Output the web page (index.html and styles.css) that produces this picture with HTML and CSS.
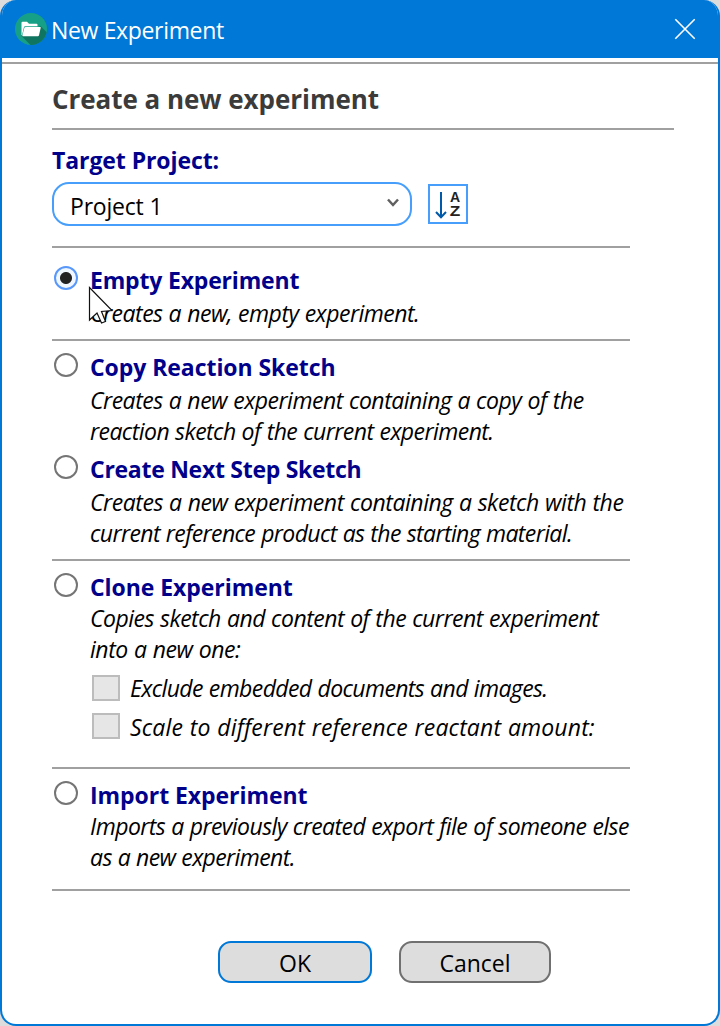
FILE: index.html
```
<!DOCTYPE html>
<html lang="en">
<head>
<meta charset="utf-8">
<title>New Experiment</title>
<link rel="stylesheet" href="styles.css">
</head>
<body>
<div class="dialog">
  <header class="titlebar">
    <svg class="app-icon" width="32" height="32" viewBox="0 0 32 32">
      <defs><clipPath id="disc"><circle cx="16" cy="16" r="16"/></clipPath></defs>
      <circle cx="16" cy="16" r="16" fill="#16a085"/>
      <path d="M25.500 13L34 21.500V34H17.500L6.500 23Z" fill="#107560" clip-path="url(#disc)"/>
      <path d="M6.500 22V9.800q0-1 1-1h4.500l2 2h7.500q1 0 1 1v1.400H10.200q-1 0-1.300 1L7.100 22Z" fill="#fff"/>
      <path d="M10.500 14h14.700q.7 0 .5.700L24 22.300q-.2.900-1.200.900H7.800q-.6 0-.4-.7l1.900-7.600q.3-.9 1.200-.9Z" fill="#fff"/>
    </svg>
    <span class="window-title">New Experiment</span>
    <svg class="close" width="22" height="22" viewBox="0 0 22 22"><path d="M1.300 1.300L20.700 20.700M20.700 1.300L1.300 20.700" stroke="#fff" stroke-width="1.600"/></svg>
  </header>
  <main class="content">
    <h1 class="title">Create a new experiment</h1>
    <div class="target">
      <div class="label">Target Project:</div>
      <div class="target-row">
        <div class="select"><span>Project 1</span>
          <svg width="12" height="10" viewBox="0 0 12 10"><path d="M1 1.500L6 7L11 1.500" fill="none" stroke="#606060" stroke-width="2.500"/></svg>
        </div>
        <div class="sort">
          <svg width="36" height="36" viewBox="0 0 36 36">
            <path d="M11 6V31M6 26L11 31.200L16 26" fill="none" stroke="#005aa9" stroke-width="2"/>
            <text class="sort-letter" x="25" y="16" text-anchor="middle">A</text>
            <text class="sort-letter" x="25" y="30" text-anchor="middle" textLength="10.500" lengthAdjust="spacingAndGlyphs">Z</text>
          </svg>
        </div>
      </div>
    </div>

    <section class="group group-empty">
      <div class="option">
        <span class="radio checked"></span>
        <div class="text">
          <h2 class="name t-loose">Empty Experiment</h2>
          <p class="line t-empty">Creates a new, empty experiment.</p>
        </div>
      </div>
      <svg class="cursor" width="26" height="40" viewBox="0 0 26 40"><path d="M1.500 1.500V34L9 27L13.500 37L17.500 35.500L13.500 25.500L24 24.500Z" fill="#fff" stroke="#111" stroke-width="1.200"/></svg>
    </section>

    <section class="group group-sketch">
      <div class="option">
        <span class="radio"></span>
        <div class="text">
          <h2 class="name t-copy">Copy Reaction Sketch</h2>
          <p class="line t-copies">Creates a new experiment containing a copy of the</p>
          <p class="line t-mid">reaction sketch of the current experiment.</p>
        </div>
      </div>
      <div class="option">
        <span class="radio"></span>
        <div class="text">
          <h2 class="name t-next">Create Next Step Sketch</h2>
          <p class="line t-wide">Creates a new experiment containing a sketch with the</p>
          <p class="line t-tight">current reference product as the starting material.</p>
        </div>
      </div>
    </section>

    <section class="group group-clone">
      <div class="option">
        <span class="radio"></span>
        <div class="text">
          <h2 class="name t-copy">Clone Experiment</h2>
          <p class="line t-empty">Copies sketch and content of the current experiment</p>
          <p class="line t-wide">into a new one:</p>
        </div>
      </div>
      <div class="checks">
        <div class="check"><span class="box"></span><span class="line t-tight">Exclude embedded documents and images.</span></div>
        <div class="check"><span class="box"></span><span class="line t-scale">Scale to different reference reactant amount:</span></div>
      </div>
    </section>

    <section class="group group-import">
      <div class="option">
        <span class="radio"></span>
        <div class="text">
          <h2 class="name t-copy">Import Experiment</h2>
          <p class="line t-mid">Imports a previously created export file of someone else</p>
          <p class="line t-tight">as a new experiment.</p>
        </div>
      </div>
    </section>
  </main>
  <footer class="actions">
    <button class="button primary">OK</button>
    <button class="button">Cancel</button>
  </footer>
</div>
</body>
</html>
```
FILE: styles.css
```
* { box-sizing: border-box; }

body {
  margin: 0;
  background: #dcdcdc;
  font: 23px/31px "Open Sans", "Noto Sans", sans-serif;
  color: #000;
}

.dialog {
  width: 720px;
  height: 1026px;
  border: 2px solid #0078d7;
  border-top: 0;
  border-radius: 16px;
  background: #fff;
  overflow: hidden;
}

.titlebar {
  display: flex;
  align-items: center;
  height: 58px;
  padding: 0 22px 0 13px;
  background: #0078d7;
  color: #fff;
}

.window-title {
  margin: 2px 0 0 4px;
  letter-spacing: -0.34px;
}

.close { margin-left: auto; }

.content {
  margin-top: 4px;
  padding: 0 44px 0 50px;
  border-top: 2px solid #a0a0a0;
}

.title {
  margin: 0;
  height: 66px;
  padding-top: 20px;
  border-bottom: 2px solid #a0a0a0;
  color: #3b3b3b;
  font-size: 26px;
  font-weight: 700;
  letter-spacing: -0.04px;
}

.target {
  width: 578px;
  height: 118px;
  padding-top: 15px;
  border-bottom: 2px solid #a0a0a0;
}

.label {
  height: 37px;
  color: #00008b;
  font-weight: 700;
  letter-spacing: -0.08px;
}

.target-row {
  display: flex;
  align-items: center;
  gap: 16px;
}

.select {
  display: flex;
  align-items: center;
  justify-content: space-between;
  width: 360px;
  height: 44px;
  padding: 0 11px 0 16px;
  border: 2px solid #479ffb;
  border-radius: 17px;
  letter-spacing: -0.2px;
}

.select span { margin-top: 4px; }
.select svg { margin-top: -3px; }

.sort {
  width: 40px;
  height: 40px;
  border: 2px solid #479ffb;
}

.sort svg { display: block; }

.sort-letter {
  fill: #222;
  font: 700 14px "Liberation Sans", sans-serif;
}

.group {
  position: relative;
  width: 578px;
  border-bottom: 2px solid #a0a0a0;
}

.group-empty { height: 93px; padding-top: 16px; }
.group-sketch { height: 220px; padding-top: 10px; }
.group-clone { height: 208px; padding-top: 10px; }
.group-import { height: 122px; padding-top: 10px; }

.option {
  display: flex;
  gap: 12px;
  padding-left: 2px;
  white-space: nowrap;
}

.option + .option { margin-top: 6px; }

.text { padding-top: 1px; }

.radio {
  flex: none;
  width: 24px;
  height: 24px;
  margin-top: 2px;
  border: 2px solid #757575;
  border-radius: 50%;
}

.radio.checked {
  border-color: #5998fb;
  background: radial-gradient(circle, #222 5.500px, #f0f7ff 6.500px);
}

.name {
  margin: 0;
  height: 33px;
  color: #00008b;
  font-size: 23px;
  font-weight: 700;
}

.group-clone .name,
.group-import .name { height: 31px; }

.line {
  margin: 0;
  font-style: italic;
  word-spacing: 0.6px;
}

.checks { padding: 7px 0 0 40px; }

.check {
  display: flex;
  align-items: center;
  gap: 10px;
  height: 31px;
  white-space: nowrap;
}

.check .line { padding-top: 2px; }

.check + .check { margin-top: 7px; }

.check + .check .line { padding-top: 3px; }

.box {
  width: 28px;
  height: 26px;
  border: 2px solid #bcbcbc;
  background: #e6e6e6;
}

/* Tracking adjustments per text line */
.t-loose { letter-spacing: -0.18px; }
.t-copy { letter-spacing: -0.06px; }
.t-next { letter-spacing: -0.28px; }
.t-empty { letter-spacing: -0.5px; }
.t-mid { letter-spacing: -0.56px; }
.t-wide { letter-spacing: -0.44px; }
.t-copies { letter-spacing: -0.48px; }
.t-tight { letter-spacing: -0.61px; }
.t-scale { letter-spacing: 0.15px; }

.cursor {
  position: absolute;
  left: 36px;
  top: 38px;
}

.actions {
  display: flex;
  gap: 27px;
  padding: 50px 0 0 216px;
}

.button {
  width: 152px;
  height: 42px;
  padding: 2px 0 0;
  border: 2px solid #707070;
  border-radius: 13px;
  background: #ddd;
  color: #000;
  font: inherit;
}

.button.primary {
  width: 154px;
  border-color: #0078d7;
}
```
